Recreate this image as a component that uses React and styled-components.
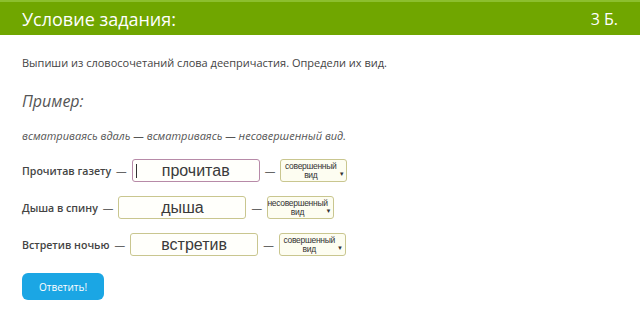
import styled, { createGlobalStyle } from "styled-components";

const Global = createGlobalStyle`
  body {
    margin: 0;
    background: #fff;
    font-family: "Open Sans", "Liberation Sans", sans-serif;
  }
`;

const Page = styled.div`
  width: 640px;
  height: 320px;
  overflow: hidden;
`;

const Header = styled.div`
  height: 33px;
  border-top: 2px solid #8cbf2e;
  background: #70a600;
  color: #fff;
  display: flex;
  align-items: center;
  justify-content: space-between;
  padding: 0 22px;
  font-size: 18px;
`;

const Points = styled.span`
  font-size: 16px;
`;

const Body = styled.div`
  padding: 20px 22px 0;
  color: #444;
`;

const Instruction = styled.p`
  margin: 0;
  font-size: 11px;
  line-height: 16px;
`;

const ExampleTitle = styled.div`
  margin-top: 19px;
  font-size: 16px;
  font-style: italic;
  color: #555;
  line-height: 22px;
`;

const ExampleText = styled.div`
  margin-top: 16px;
  font-size: 11px;
  font-style: italic;
  color: #555;
  line-height: 16px;
`;

const Rows = styled.div`
  margin-top: 15px;
  display: flex;
  flex-direction: column;
  gap: 14px;
`;

const Row = styled.div`
  display: flex;
  align-items: center;
  height: 23px;
  font-size: 10.6px;
  font-weight: 600;
  color: #444;
`;

const Dash = styled.span`
  margin: 0 5px;
  font-weight: 400;
  color: #666;
`;

const Input = styled.div`
  position: relative;
  box-sizing: border-box;
  width: 128px;
  height: 23px;
  border: 1px solid ${(p) => (p.$focused ? "#b78aa8" : "#c9c68f")};
  border-radius: 3px;
  background: #fffffb;
  display: flex;
  align-items: center;
  justify-content: center;
  font-family: "Liberation Sans", Arial, sans-serif;
  font-size: 16px;
  font-weight: 400;
  color: #3a3a3a;
`;

const Caret = styled.span`
  position: absolute;
  left: 3px;
  top: 4px;
  width: 1px;
  height: 14px;
  background: #333;
`;

const Select = styled.div`
  position: relative;
  box-sizing: border-box;
  width: 67px;
  height: 23px;
  padding-right: 6px;
  border: 1px solid #c9c68f;
  border-radius: 3px;
  background: #fdfdf1;
  display: flex;
  flex-direction: column;
  align-items: center;
  justify-content: center;
  font-family: "Liberation Sans", Arial, sans-serif;
  font-size: 8.5px;
  font-weight: 400;
  line-height: 9px;
  letter-spacing: -0.3px;
  color: #333;
`;

const Arrow = styled.span`
  position: absolute;
  right: 2px;
  top: 11px;
  font-size: 6px;
  line-height: 6px;
  color: #333;
`;

const Button = styled.button`
  margin-top: 17px;
  width: 82px;
  height: 27px;
  border: none;
  border-radius: 6px;
  background: #1ba6e4;
  color: #fff;
  font-family: "Open Sans", "Liberation Sans", sans-serif;
  font-size: 10px;
  cursor: pointer;
`;

const rows = [
  { label: "Прочитав газету", word: "прочитав", aspect: "совершенный", focused: true },
  { label: "Дыша в спину", word: "дыша", aspect: "несовершенный" },
  { label: "Встретив ночью", word: "встретив", aspect: "совершенный" },
];

export default function App() {
  return (
    <Page>
      <Global />
      <Header>
        <span>Условие задания:</span>
        <Points>3 Б.</Points>
      </Header>
      <Body>
        <Instruction>Выпиши из словосочетаний слова деепричастия. Определи их вид.</Instruction>
        <ExampleTitle>Пример:</ExampleTitle>
        <ExampleText>всматриваясь вдаль — всматриваясь — несовершенный вид.</ExampleText>
        <Rows>
          {rows.map((r) => (
            <Row key={r.label}>
              {r.label}
              <Dash>—</Dash>
              <Input $focused={r.focused}>
                {r.focused && <Caret />}
                {r.word}
              </Input>
              <Dash>—</Dash>
              <Select>
                <span>{r.aspect}</span>
                <span>вид</span>
                <Arrow>▼</Arrow>
              </Select>
            </Row>
          ))}
        </Rows>
        <Button>Ответить!</Button>
      </Body>
    </Page>
  );
}
